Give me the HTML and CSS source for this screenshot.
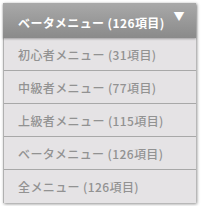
FILE: index.html
```html
<!DOCTYPE html>
<html lang="ja">
<head>
<meta charset="UTF-8">
<title>メニュー</title>
<link rel="stylesheet" href="styles.css">
</head>
<body>

<div class="menu">
    <div class="menu-head">
        <span>ベータメニュー (126項目)</span>
        <span class="arrow">&#9660;</span>
    </div>
    <ul class="menu-list">
        <li>初心者メニュー (31項目)</li>
        <li>中級者メニュー (77項目)</li>
        <li>上級者メニュー (115項目)</li>
        <li>ベータメニュー (126項目)</li>
        <li>全メニュー (126項目)</li>
    </ul>
</div>

</body>
</html>
```

FILE: styles.css
```css
body {
    margin: 0;
    padding: 3px 8px 5px 3px;
    background: #fff;
    font-family: "Noto Sans CJK JP", "Noto Sans", sans-serif;
}
.menu {
    width: 193px;
    box-shadow: 1px 1px 3px rgba(0, 0, 0, 0.45);
}
.menu-head {
    height: 35px;
    display: flex;
    align-items: center;
    justify-content: space-between;
    padding: 3px 11px 0 15px;
    background: linear-gradient(#a9a9a9, #8a8a8a);
    color: #fff;
    font-size: 12px;
    font-weight: bold;
    letter-spacing: 0.4px;
    box-sizing: border-box;
    box-shadow: 0 1px 2px rgba(0, 0, 0, 0.3);
    position: relative;
}
.arrow {
    font-size: 11px;
    margin-top: -12px;
}
.menu-list {
    list-style: none;
    margin: 0;
    padding: 0;
    background: #e5e3e5;
    border-left: 1px solid #b0b0b0;
}
.menu-list li {
    height: 33px;
    line-height: 34px;
    padding-left: 14px;
    font-size: 12px;
    font-weight: 500;
    letter-spacing: 0.4px;
    color: #929292;
    border-bottom: 1px solid #a8a8a8;
    box-sizing: border-box;
}
.menu-list li:last-child {
    border-bottom: none;
}
```
